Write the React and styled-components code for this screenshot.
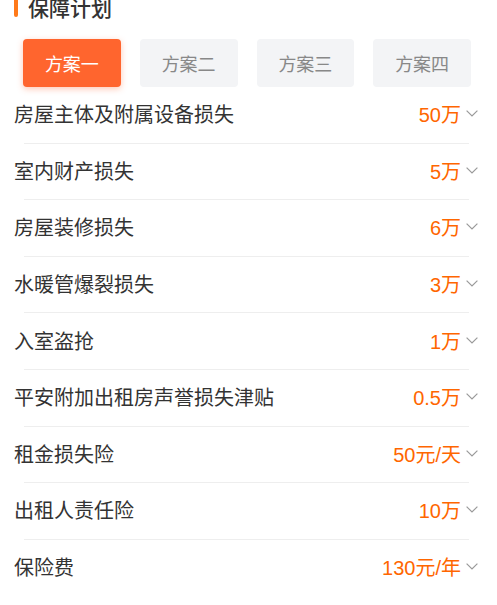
import React, { useState } from "react";
import styled, { createGlobalStyle } from "styled-components";

const GlobalStyle = createGlobalStyle`
  body {
    margin: 0;
    background: #fff;
    font-family: "Liberation Sans", "Noto Sans CJK SC", sans-serif;
  }
`;

const plans = ["方案一", "方案二", "方案三", "方案四"];

const items = [
  { label: "房屋主体及附属设备损失", value: "50万" },
  { label: "室内财产损失", value: "5万" },
  { label: "房屋装修损失", value: "6万" },
  { label: "水暖管爆裂损失", value: "3万" },
  { label: "入室盗抢", value: "1万" },
  { label: "平安附加出租房声誉损失津贴", value: "0.5万" },
  { label: "租金损失险", value: "50元/天" },
  { label: "出租人责任险", value: "10万" },
  { label: "保险费", value: "130元/年" },
];

export default function App() {
  const [active, setActive] = useState(0);
  return (
    <>
      <GlobalStyle />
      <Page>
        <Header>
          <Mark />
          <Title>保障计划</Title>
        </Header>

        <Tabs>
          {plans.map((p, i) => (
            <Tab key={p} $active={i === active} onClick={() => setActive(i)}>
              {p}
            </Tab>
          ))}
        </Tabs>

        <List>
          {items.map((it) => (
            <Row key={it.label}>
              <Label>{it.label}</Label>
              <Value>
                {it.value}
                <Chevron viewBox="0 0 12 7">
                  <path d="M0.6 0.6 L6 6 L11.4 0.6" />
                </Chevron>
              </Value>
            </Row>
          ))}
        </List>
      </Page>
    </>
  );
}

const Page = styled.div`
  width: 497px;
  overflow: hidden;
`;

const Header = styled.div`
  display: flex;
  align-items: center;
  height: 24px;
  margin-top: -5px;
  padding-left: 14px;
`;

const Mark = styled.span`
  width: 4px;
  height: 19px;
  background: #ff7a1a;
  border-radius: 2px;
  margin-right: 10px;
`;

const Title = styled.h2`
  margin: 0;
  font-family: "Noto Sans CJK SC", sans-serif;
  font-size: 21px;
  font-weight: 500;
  line-height: 24px;
  color: #333;
`;

const Tabs = styled.div`
  display: flex;
  gap: 19px;
  margin: 20px 0 0 23px;
  width: 448px;
`;

const Tab = styled.button`
  flex: 1;
  height: 48px;
  border: none;
  border-radius: 4px;
  font-family: "Noto Sans CJK SC", sans-serif;
  font-size: 18px;
  cursor: pointer;
  background: ${(p) => (p.$active ? "#ff652e" : "#f3f4f6")};
  color: ${(p) => (p.$active ? "#fff" : "#888")};
  box-shadow: ${(p) => (p.$active ? "0 2px 6px rgba(255, 101, 46, 0.35)" : "none")};
`;

const List = styled.div`
  display: flex;
  flex-direction: column;
`;

const Row = styled.div`
  position: relative;
  display: flex;
  align-items: center;
  justify-content: space-between;
  box-sizing: border-box;
  height: 56.6px;
  padding: 0 19px 3px 14px;

  &::after {
    content: "";
    position: absolute;
    left: 24px;
    right: 28px;
    bottom: 0;
    height: 1px;
    background: #eeeeee;
  }

  &:last-child::after {
    display: none;
  }
`;

const Label = styled.span`
  font-family: "Noto Sans CJK SC", sans-serif;
  font-size: 20px;
  color: #333;
`;

const Value = styled.span`
  display: flex;
  align-items: center;
  font-size: 20px;
  color: #ff6600;
`;

const Chevron = styled.svg`
  width: 12px;
  height: 7px;
  margin-left: 5px;
  fill: none;
  stroke: #9a9a9a;
  stroke-width: 1.2;
`;
